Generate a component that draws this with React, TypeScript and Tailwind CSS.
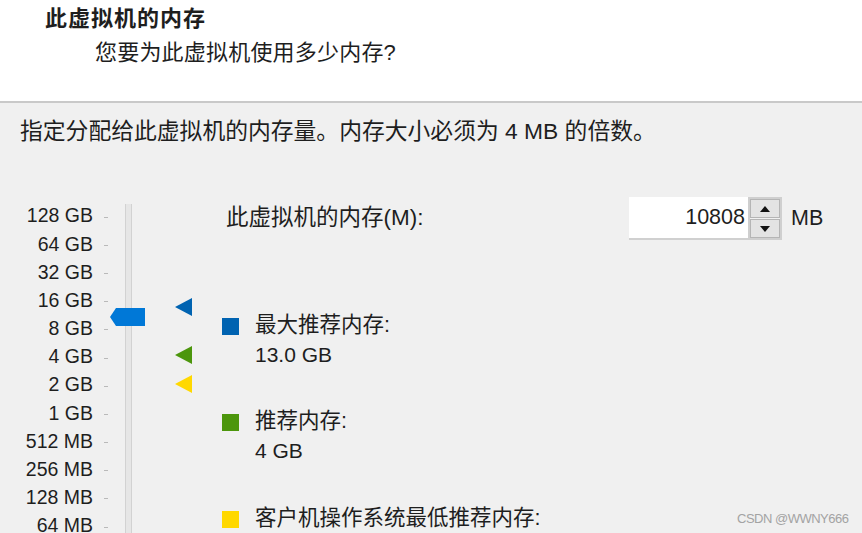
import React from 'react';

const scale = ['128 GB', '64 GB', '32 GB', '16 GB', '8 GB', '4 GB', '2 GB', '1 GB', '512 MB', '256 MB', '128 MB', '64 MB'];

const legend = [
  { color: 'bg-[#0063b1]', label: '最大推荐内存:', value: '13.0 GB', gap: 'mt-[70px]' },
  { color: 'bg-[#4c960c]', label: '推荐内存:', value: '4 GB', gap: 'mt-[36px]' },
  { color: 'bg-[#ffd800]', label: '客户机操作系统最低推荐内存:', value: '', gap: 'mt-[37px]' },
];

const Marker: React.FC<{ color: string; top: string }> = ({ color, top }) => (
  <svg className={`absolute left-[175px] ${top}`} width="17" height="18" viewBox="0 0 17 18">
    <polygon points="0,9 17,0 17,18" fill={color} />
  </svg>
);

export default function App() {
  return (
    <div className="relative w-[862px] h-[533px] overflow-hidden bg-[#f0f0f0] text-[#1e1e1e] font-['Liberation_Sans','Noto_Sans_CJK_SC',sans-serif]">
      {/* header */}
      <div className="h-[103px] bg-white border-b-2 border-[#c9c9c9]">
        <div className="pt-[5px] pl-[45px] text-[22px] font-bold leading-[28px] tracking-[1px]">此虚拟机的内存</div>
        <div className="mt-[6px] pl-[95px] text-[22px] leading-[28px] tracking-[0.2px]">您要为此虚拟机使用多少内存?</div>
      </div>

      <div className="pt-[13px] pl-[20px] text-[22.8px] leading-[30px]">
        指定分配给此虚拟机的内存量。内存大小必须为 4 MB 的倍数。
      </div>

      <div className="mt-[51px] flex">
        {/* slider */}
        <div className="relative w-[222px] h-[340px] flex">
          <div className="w-[108px] pt-[5px]">
            {scale.map((s) => (
              <div key={s} className="h-[28.2px] flex items-center">
                <span className="w-[93px] text-right text-[19.5px] leading-none whitespace-nowrap">{s}</span>
                <span className="ml-[11px] w-[4px] h-px bg-[#b9b9b9] translate-y-[1px]" />
              </div>
            ))}
          </div>
          <div className="ml-[17px] mt-[7px] w-[7px] bg-[#e6e6e6] border-x border-[#d2d2d2]" />

          <svg className="absolute left-[110px] top-[111px]" width="35" height="18" viewBox="0 0 35 18">
            <polygon points="0,9 6,0 35,0 35,18 6,18" fill="#0078d7" />
          </svg>
          <Marker color="#0063b1" top="top-[101px]" />
          <Marker color="#4c960c" top="top-[149px]" />
          <Marker color="#ffd800" top="top-[178px]" />
        </div>

        {/* settings */}
        <div className="flex-1 flex flex-col">
          <div className="h-[43px] flex items-center">
            <span className="ml-[4px] w-[403px] text-[22.5px] leading-none">此虚拟机的内存(M):</span>
            <div className="flex h-[43px]">
              <div className="w-[119px] bg-white border-b-2 border-[#d0d0d0] flex items-center justify-end pr-[3px] text-[21.5px]">
                10808
              </div>
              <div className="w-[34px] border-2 border-[#cfcfcf] flex flex-col gap-[1px] bg-[#f0f0f0]">
                <div className="flex-1 bg-[#e3e3e3] border border-[#b5b5b5] flex items-center justify-center">
                  <svg width="10" height="6" viewBox="0 0 10 6"><polygon points="0,6 5,0 10,6" fill="#111" /></svg>
                </div>
                <div className="flex-1 bg-[#e3e3e3] border border-[#b5b5b5] flex items-center justify-center">
                  <svg width="10" height="6" viewBox="0 0 10 6"><polygon points="0,0 10,0 5,6" fill="#111" /></svg>
                </div>
              </div>
            </div>
            <span className="ml-[9px] text-[21.5px] leading-none">MB</span>
          </div>

          {legend.map((l) => (
            <div key={l.label} className={`flex ${l.gap}`}>
              <span className={`w-[17px] h-[17px] mt-[8px] ${l.color}`} />
              <div className="ml-[16px] flex flex-col">
                <span className="h-[30px] flex items-center text-[21.5px] whitespace-nowrap">{l.label}</span>
                {l.value && <span className="h-[30px] flex items-center text-[21px]">{l.value}</span>}
              </div>
            </div>
          ))}
        </div>
      </div>

      <div className="absolute left-[737px] top-[509px] text-[13px] tracking-[-0.5px] text-[#a3a3a3] font-['Liberation_Sans',sans-serif]">
        CSDN @WWNY666
      </div>
    </div>
  );
}
